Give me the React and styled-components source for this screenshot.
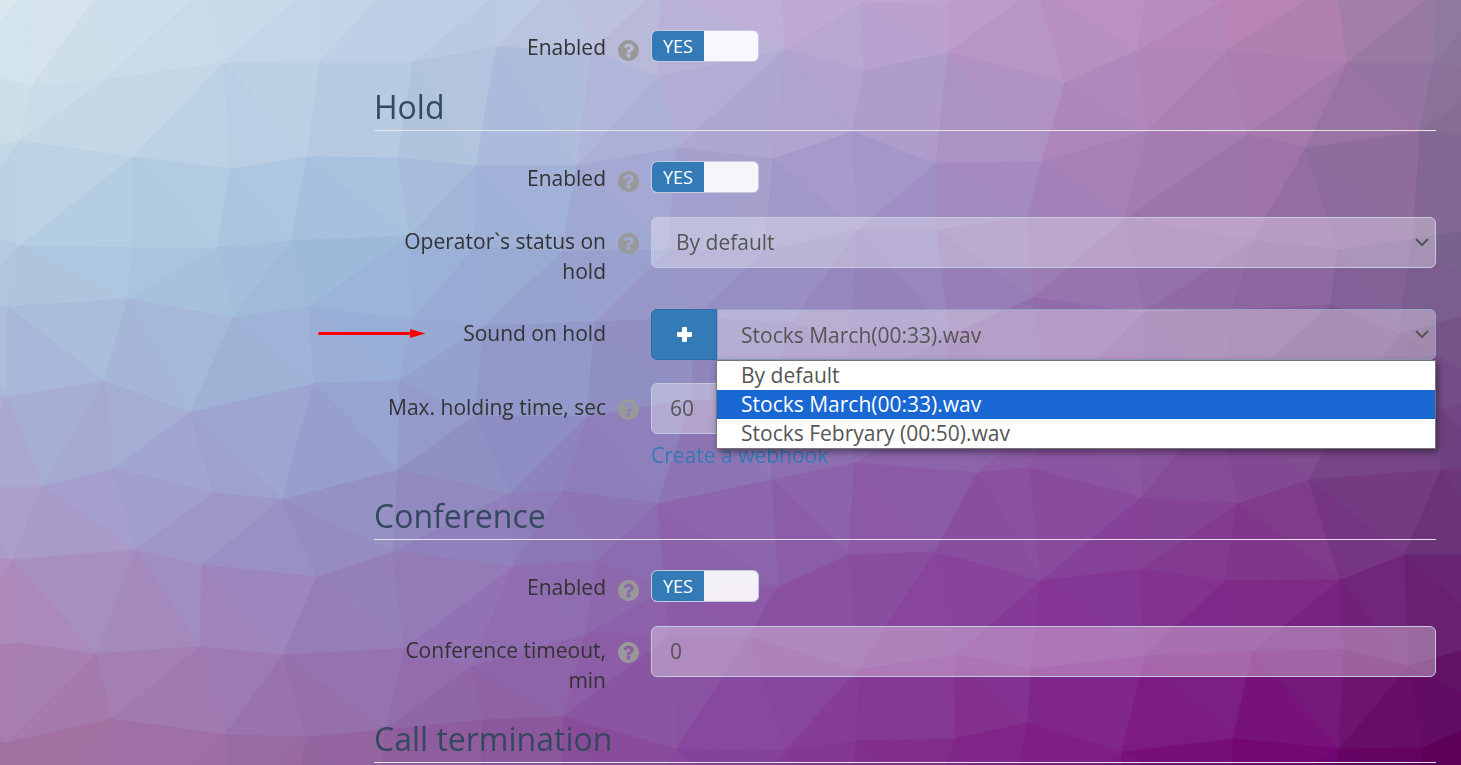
import React, { useState } from "react";
import styled, { createGlobalStyle, css } from "styled-components";

const GlobalStyle = createGlobalStyle`
  * {
    box-sizing: border-box;
  }

  body {
    margin: 0;
    font-family: "Open Sans", "Noto Sans", sans-serif;
    font-size: 21px;
    line-height: 30px;
    color: #333;
    background: #8c68ae;
  }
`;

// background mesh, [x, y] pairs, one line per band
const MESH = [
  [-40, -30, 30, -12, 97, -4, 205, -12, 327, -27, 389, -12, 500, -8, 565, -22, 662, -15, 781, -34, 861, 4, 947, 3, 1037, -12, 1148, -10, 1220, 3, 1335, -17, 1436, -8, 1500, -12],
  [-40, 68, 32, 87, 105, 80, 224, 63, 320, 62, 413, 62, 497, 47, 592, 52, 658, 77, 785, 50, 864, 71, 948, 53, 1065, 83, 1137, 51, 1226, 51, 1347, 63, 1433, 63, 1500, 74],
  [-40, 153, 20, 141, 133, 157, 231, 169, 307, 157, 398, 158, 476, 166, 577, 166, 678, 148, 773, 159, 852, 132, 936, 164, 1042, 162, 1148, 131, 1247, 135, 1306, 148, 1420, 132, 1500, 138],
  [-40, 225, 20, 246, 132, 248, 217, 248, 291, 241, 410, 236, 475, 247, 562, 252, 668, 250, 765, 251, 858, 230, 937, 230, 1028, 218, 1125, 219, 1254, 240, 1338, 250, 1413, 239, 1500, 226],
  [-40, 312, 8, 307, 128, 299, 233, 318, 309, 307, 413, 320, 484, 326, 595, 322, 694, 318, 792, 323, 850, 343, 950, 335, 1033, 298, 1143, 313, 1232, 310, 1331, 305, 1399, 334, 1500, 306],
  [-40, 392, 7, 397, 104, 381, 190, 413, 314, 384, 400, 381, 475, 416, 587, 417, 692, 400, 770, 405, 850, 395, 950, 405, 1050, 410, 1145, 400, 1220, 405, 1346, 410, 1442, 409, 1500, 392],
  [-40, 487, 43, 487, 113, 469, 214, 493, 282, 500, 398, 470, 510, 494, 563, 491, 658, 504, 772, 480, 855, 463, 978, 473, 1030, 468, 1141, 498, 1238, 504, 1309, 480, 1441, 470, 1500, 470],
  [-40, 553, 12, 560, 135, 550, 202, 565, 317, 577, 393, 552, 513, 567, 597, 561, 665, 590, 779, 587, 849, 555, 935, 552, 1041, 581, 1140, 569, 1225, 581, 1340, 580, 1405, 555, 1500, 555],
  [-40, 650, 20, 643, 96, 654, 200, 647, 283, 655, 405, 649, 471, 667, 585, 635, 670, 636, 748, 637, 858, 670, 956, 655, 1031, 669, 1145, 656, 1253, 652, 1344, 650, 1409, 666, 1500, 640],
  [-40, 735, 6, 743, 112, 719, 225, 735, 306, 737, 385, 730, 483, 720, 563, 717, 677, 749, 785, 751, 857, 741, 955, 739, 1028, 723, 1122, 752, 1233, 739, 1339, 749, 1422, 748, 1500, 714],
  [-40, 830, 40, 815, 115, 830, 226, 820, 290, 835, 380, 815, 480, 828, 560, 815, 640, 830, 740, 820, 840, 835, 930, 815, 1010, 825, 1120, 835, 1230, 820, 1330, 830, 1424, 820, 1500, 830],
];

const MESH_COLORS = [
  ["dbe8ee", "cddfec", "c2d3e8", "bdc9e2", "bfb0d6", "bfa3cf", "bb93c2", "b984b5", "8f7a9e"],
  ["c9dde8", "bfd3e5", "b4cae1", "aab8da", "aea8d2", "ab9acb", "ad86bb", "a578ac", "866c95"],
  ["b4cbe2", "a9c5de", "9cb9da", "9aa9d3", "9c97c8", "9889bf", "9a78b2", "9069a4", "7a628f"],
  ["a9b5d6", "a3b3d6", "98a9d5", "8e97c8", "8f83bb", "8d72b0", "8e62a5", "825793", "744d87"],
  ["ab9fcd", "a09ccb", "9590c4", "8c7cb9", "8c68ae", "8b58a5", "884a9c", "803f8e", "6b357a"],
  ["ae86b8", "a285bb", "9579b6", "8f69ad", "8a54a3", "88439a", "843093", "7b2483", "651b6c"],
  ["a3719f", "9d6fa5", "92639f", "8b539a", "85429a", "812d8c", "7e1a80", "720673", "5c0058"],
];

const MESH_W = 1461;
const MESH_H = 765;

const channel = (hex, i) => parseInt(hex.slice(i * 2, i * 2 + 2), 16);

const colorAt = (x, y) => {
  const gx = Math.min(Math.max((x / MESH_W) * 8, 0), 7.999);
  const gy = Math.min(Math.max((y / MESH_H) * 6, 0), 5.999);
  const cx = Math.floor(gx);
  const cy = Math.floor(gy);
  const fx = gx - cx;
  const fy = gy - cy;
  const rgb = [0, 1, 2].map((i) => {
    const top =
      channel(MESH_COLORS[cy][cx], i) * (1 - fx) +
      channel(MESH_COLORS[cy][cx + 1], i) * fx;
    const bottom =
      channel(MESH_COLORS[cy + 1][cx], i) * (1 - fx) +
      channel(MESH_COLORS[cy + 1][cx + 1], i) * fx;
    return Math.round(top * (1 - fy) + bottom * fy);
  });
  return `rgb(${rgb.join(",")})`;
};

const circumcircle = (a, b, c) => {
  const d =
    2 * (a[0] * (b[1] - c[1]) + b[0] * (c[1] - a[1]) + c[0] * (a[1] - b[1]));
  const a2 = a[0] ** 2 + a[1] ** 2;
  const b2 = b[0] ** 2 + b[1] ** 2;
  const c2 = c[0] ** 2 + c[1] ** 2;
  const x = (a2 * (b[1] - c[1]) + b2 * (c[1] - a[1]) + c2 * (a[1] - b[1])) / d;
  const y = (a2 * (c[0] - b[0]) + b2 * (a[0] - c[0]) + c2 * (b[0] - a[0])) / d;
  return { x, y, r: (a[0] - x) ** 2 + (a[1] - y) ** 2 };
};

// Bowyer-Watson
const triangulate = (points) => {
  const outer = [
    [-9000, -8000],
    [9000, -8100],
    [700, 12000],
  ];
  const make = (pts) => ({ pts, circle: circumcircle(...pts) });
  let triangles = [make(outer)];

  points.forEach((p) => {
    const edges = [];
    const isBad = ({ circle }) =>
      (p[0] - circle.x) ** 2 + (p[1] - circle.y) ** 2 < circle.r;
    triangles.filter(isBad).forEach(({ pts: [a, b, c] }) => {
      [[a, b], [b, c], [c, a]].forEach(([s, e]) => {
        const twin = edges.findIndex(([s2, e2]) =>
          (s2 === e && e2 === s) || (s2 === s && e2 === e)
        );
        if (twin >= 0) edges.splice(twin, 1);
        else edges.push([s, e]);
      });
    });
    triangles = triangles.filter((t) => !isBad(t));
    edges.forEach(([s, e]) => triangles.push(make([s, e, p])));
  });

  return triangles
    .map(({ pts }) => pts)
    .filter((pts) => !pts.some((p) => outer.includes(p)));
};

const meshPoints = MESH.flatMap((band) =>
  band.reduce(
    (list, v, i) => (i % 2 ? [...list, [band[i - 1], v]] : list),
    []
  )
);

const meshTriangles = triangulate(meshPoints).map((pts) => {
  const x = (pts[0][0] + pts[1][0] + pts[2][0]) / 3;
  const y = (pts[0][1] + pts[1][1] + pts[2][1]) / 3;
  return { points: pts.join(" "), fill: colorAt(x, y) };
});

const Backdrop = styled.svg`
  position: fixed;
  inset: 0;
  z-index: -1;
  width: 100%;
  height: 100%;
`;

const Page = styled.main`
  position: relative;
  z-index: 0;
  min-height: 100vh;
  padding: 30px 25px 0 374px;
`;

const Heading = styled.h2`
  margin: 26px 0 30px;
  padding-bottom: 5px;
  border-bottom: 1px solid #e5e5e5;
  font-size: 32px;
  line-height: 36px;
  font-weight: 400;
  color: #34495e;

  &:last-child {
    margin-bottom: 0;
  }
`;

const Row = styled.div`
  position: relative;
  display: grid;
  grid-template-columns: 232px 21px 1fr;
  column-gap: 12px;
  align-items: start;
  min-height: 33px;

  & + & {
    margin-top: 23px;
  }
`;

const Caption = styled.label`
  padding-top: ${(props) => (props.$compact ? 2 : 9)}px;
  text-align: right;
`;

const Help = styled.span`
  display: flex;
  padding-top: ${(props) => (props.$compact ? 10 : 16)}px;
  color: #999;
`;

const Field = styled.div`
  grid-column: 3;
  min-width: 0;
`;

const Switch = styled.label`
  position: relative;
  display: flex;
  width: 108px;
  height: 32px;
  border: 1px solid #c2cadb;
  border-radius: 6px;
  background: rgba(255, 255, 255, 0.9);
  overflow: hidden;
  cursor: pointer;
`;

const SwitchInput = styled.input`
  position: absolute;
  inset: 0;
  width: 100%;
  height: 100%;
  margin: 0;
  opacity: 0;
  cursor: pointer;
`;

const SwitchText = styled.span`
  width: 52px;
  margin-left: ${(props) => (props.$on ? 0 : 54)}px;
  background: ${(props) => (props.$on ? "#337ab7" : "#999")};
  color: #fff;
  font-size: 18px;
  font-weight: 500;
  text-align: center;
`;

const control = css`
  display: block;
  width: 100%;
  height: 51px;
  margin: 0;
  border: 1px solid #c2cadb;
  border-radius: 6px;
  background: rgba(255, 255, 255, 0.33);
  color: #555;
  font: inherit;
  outline: none;
`;

const TextInput = styled.input`
  ${control}
  padding: 0 18px 2px;
`;

const SelectBox = styled.div`
  position: relative;
  flex: 1;
  min-width: 0;
`;

const Select = styled.select`
  ${control}
  appearance: none;
  padding: 0 36px 2px 24px;

  ${(props) =>
    props.$grouped &&
    css`
      padding: 0 36px 0 23px;
      border-color: #94a2c4;
      border-radius: 0 6px 6px 0;
    `}
`;

const Chevron = styled.svg`
  position: absolute;
  top: 20px;
  right: 7px;
  pointer-events: none;
`;

const InputGroup = styled.div`
  display: flex;
`;

const AddButton = styled.button`
  display: flex;
  align-items: center;
  justify-content: center;
  width: 66px;
  height: 51px;
  padding: 0;
  border: 1px solid #2e6da4;
  border-radius: 6px 0 0 6px;
  background: #337ab7;
  color: #fff;
  cursor: pointer;
`;

const Options = styled.ul`
  position: absolute;
  top: 51px;
  left: -1px;
  right: 0;
  z-index: 2;
  margin: 0;
  padding: 0;
  border: 1px solid #767676;
  background: #fff;
  box-shadow: 2px 3px 7px rgba(0, 0, 0, 0.45);
  list-style: none;
`;

const Option = styled.li`
  padding-left: 24px;
  line-height: 29px;
  background: ${(props) => (props.$active ? "#1967d2" : "#fff")};
  color: ${(props) => (props.$active ? "#fff" : "#555")};
  cursor: default;
`;

const WebhookLink = styled.a`
  display: block;
  margin-top: 6px;
  padding-bottom: 2px;
  color: #337ab7;
  text-decoration: none;
`;

const Pointer = styled.svg`
  position: absolute;
  top: 20px;
  left: -56px;
`;

const HelpIcon = () => (
  <svg width="21" height="21" viewBox="128 128 1536 1536" fill="currentColor" aria-hidden="true">
    <path d="M1024 1376v-192q0-14-9-23t-23-9h-192q-14 0-23 9t-9 23v192q0 14 9 23t23 9h192q14 0 23-9t9-23zm256-672q0-88-55.500-163t-138.500-116-170-41q-243 0-371 213-15 24 8 42l132 100q7 6 19 6 16 0 25-12 53-68 86-92 34-24 86-24 48 0 85.500 26t37.500 59q0 38-20 61t-68 45q-63 28-115.500 86.500t-52.500 125.500v36q0 14 9 23t23 9h192q14 0 23-9t9-23q0-19 21.500-49.500t54.500-49.500q32-18 49-28.500t46-35 44.500-48 28-60.500 12.500-81zm384 192q0 209-103 385.500t-279.500 279.500-385.500 103-385.500-103-279.500-279.500-103-385.500 103-385.500 279.500-279.500 385.500-103 385.500 103 279.500 279.500 103 385.500z" />
  </svg>
);

const ChevronIcon = () => (
  <Chevron width="14" height="10" viewBox="0 0 14 10" fill="none" stroke="#555" strokeWidth="2" aria-hidden="true">
    <path d="M1 2l6 6 6-6" />
  </Chevron>
);

const PlusIcon = () => (
  <svg width="15" height="15" viewBox="0 0 15 15" fill="currentColor" aria-hidden="true">
    <path d="M6 0h3a1 1 0 0 1 1 1v4h4a1 1 0 0 1 1 1v3a1 1 0 0 1-1 1h-4v4a1 1 0 0 1-1 1h-3a1 1 0 0 1-1-1v-4h-4a1 1 0 0 1-1-1v-3a1 1 0 0 1 1-1h4v-4a1 1 0 0 1 1-1z" />
  </svg>
);

const FormRow = ({ id, label, help = true, compact, children }) => (
  <Row>
    <Caption htmlFor={id} $compact={compact}>
      {label}
    </Caption>
    {help && (
      <Help $compact={compact}>
        <HelpIcon />
      </Help>
    )}
    <Field>{children}</Field>
  </Row>
);

const ToggleRow = ({ id }) => {
  const [on, setOn] = useState(true);

  return (
    <FormRow id={id} label="Enabled" compact>
      <Switch>
        <SwitchInput
          id={id}
          type="checkbox"
          checked={on}
          onChange={(e) => setOn(e.target.checked)}
        />
        <SwitchText $on={on}>{on ? "YES" : "NO"}</SwitchText>
      </Switch>
    </FormRow>
  );
};

const SOUNDS = [
  "By default",
  "Stocks March(00:33).wav",
  "Stocks Febryary (00:50).wav",
];

const SoundRow = () => {
  const [sound, setSound] = useState(SOUNDS[1]);

  return (
    <FormRow id="holdSound" label="Sound on hold" help={false}>
      <Pointer width="108" height="10" viewBox="0 0 108 10" aria-hidden="true">
        <path d="M1.500 4.500H94" stroke="#f00" strokeWidth="3" strokeLinecap="round" />
        <path d="M92 0l15.500 4.500L92 9z" fill="#f00" />
      </Pointer>
      <InputGroup>
        <AddButton type="button" aria-label="Add sound">
          <PlusIcon />
        </AddButton>
        <SelectBox>
          <Select
            id="holdSound"
            $grouped
            value={sound}
            onChange={(e) => setSound(e.target.value)}
          >
            {SOUNDS.map((name) => (
              <option key={name}>{name}</option>
            ))}
          </Select>
          <ChevronIcon />
          <Options role="listbox" aria-label="Sound on hold">
            {SOUNDS.map((name) => (
              <Option
                key={name}
                role="option"
                aria-selected={name === sound}
                $active={name === sound}
                onClick={() => setSound(name)}
              >
                {name}
              </Option>
            ))}
          </Options>
        </SelectBox>
      </InputGroup>
    </FormRow>
  );
};

const App = () => (
  <>
    <GlobalStyle />
    <Page>
      <Backdrop
        viewBox={`0 0 ${MESH_W} ${MESH_H}`}
        preserveAspectRatio="xMidYMid slice"
        aria-hidden="true"
      >
        {meshTriangles.map(({ points, fill }) => (
          <polygon key={points} points={points} fill={fill} stroke={fill} strokeWidth="1" />
        ))}
      </Backdrop>

      <ToggleRow id="generalEnabled" />

      <Heading>Hold</Heading>
      <ToggleRow id="holdEnabled" />
      <FormRow id="holdStatus" label="Operator`s status on hold">
        <SelectBox>
          <Select id="holdStatus">
            <option>By default</option>
          </Select>
          <ChevronIcon />
        </SelectBox>
      </FormRow>
      <SoundRow />
      <FormRow id="holdTime" label="Max. holding time, sec">
        <TextInput id="holdTime" type="text" defaultValue="60" />
        <WebhookLink href="#webhook">Create a webhook</WebhookLink>
      </FormRow>

      <Heading>Conference</Heading>
      <ToggleRow id="conferenceEnabled" />
      <FormRow id="conferenceTimeout" label="Conference timeout, min">
        <TextInput id="conferenceTimeout" type="text" defaultValue="0" />
      </FormRow>

      <Heading>Call termination</Heading>
    </Page>
  </>
);

export default App;
